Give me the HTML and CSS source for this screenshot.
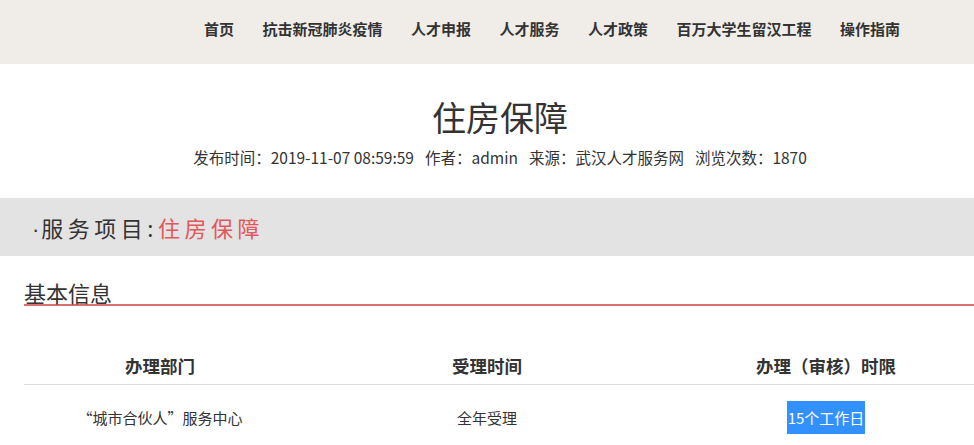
FILE: index.html
```html
<!DOCTYPE html>
<html lang="zh-CN">

<head>
    <meta charset="UTF-8">
    <meta name="viewport" content="width=device-width, initial-scale=1.0">
    <title>住房保障</title>

    <link rel="stylesheet" href="styles.css">
</head>

<body>
    <div id="header">
        <ul class="nav">
            <li><a href="javascript:;">首页</a></li>
            <li><a href="javascript:;">抗击新冠肺炎疫情</a></li>
            <li><a href="javascript:;">人才申报</a></li>
            <li><a href="javascript:;">人才服务</a></li>
            <li><a href="javascript:;">人才政策</a></li>
            <li><a href="javascript:;">百万大学生留汉工程</a></li>
            <li><a href="javascript:;">操作指南</a></li>
        </ul>
    </div>

    <div class="article-head">
        <h1 class="title">住房保障</h1>
        <p class="meta">
            <span>发布时间：2019-11-07 08:59:59</span>
            <span>作者：admin</span>
            <span>来源：武汉人才服务网</span>
            <span>浏览次数：1870</span>
        </p>
    </div>

    <div class="service-bar"><span class="dot">·</span>服务项目:<span class="red">住房保障</span></div>

    <h2 class="sub-title">基本信息</h2>

    <table class="info">
        <thead>
            <tr>
                <th class="c1">办理部门</th>
                <th class="c2">受理时间</th>
                <th class="c3">办理（审核）时限</th>
            </tr>
        </thead>
        <tbody>
            <tr>
                <td>“城市合伙人”服务中心</td>
                <td>全年受理</td>
                <td><span class="hl">15个工作日</span></td>
            </tr>
        </tbody>
    </table>
</body>

</html>
```

FILE: styles.css
```css
* {
    padding: 0;
    margin: 0;
}

body {
    font-family: "Noto Sans CJK SC", "Noto Sans", sans-serif;
    color: #333;
    background: #fff;
    overflow: hidden;
}

#header {
    height: 64px;
    background: #f0ede9;
}

.nav {
    display: flex;
    justify-content: flex-end;
    align-items: center;
    gap: 28.5px;
    height: 56px;
    padding-right: 74px;
    list-style: none;
}

.nav a {
    font-size: 15px;
    font-weight: bold;
    line-height: 20px;
    color: #333;
    text-decoration: none;
}

.article-head {
    text-align: center;
    padding: 32px 0 0 26px;
}

.title {
    font-size: 34px;
    font-weight: normal;
    line-height: 42px;
}

.meta {
    display: flex;
    justify-content: center;
    gap: 11px;
    margin-top: 9px;
    font-size: 15.5px;
    line-height: 20px;
}

.service-bar {
    margin-top: 31px;
    height: 58px;
    padding-left: 32px;
    background: #e3e3e3;
    font-size: 22px;
    line-height: 58px;
    letter-spacing: 4.5px;
}

.service-bar .dot {
    font-family: "Liberation Sans", sans-serif;
    letter-spacing: 2px;
}

.service-bar .red {
    color: #e0585b;
}

.sub-title {
    margin: 24px 0 0 24px;
    border-bottom: 2px solid #d8706f;
    font-size: 22px;
    font-weight: normal;
    line-height: 24px;
}

.info {
    margin: 42px 0 0 24px;
    width: 950px;
    border-collapse: collapse;
    text-align: center;
}

.info th {
    height: 36px;
    font-size: 17.5px;
    font-weight: bold;
    line-height: 36px;
    border-bottom: 1px solid #ddd;
}

.info .c1 {
    width: 272px;
}

.info .c2 {
    width: 382px;
}

.info td {
    padding: 16px 0;
    font-size: 15px;
    line-height: 33px;
}

.hl {
    display: inline-block;
    padding: 0 1px;
    background: #3390ff;
    color: #fff;
}
```
